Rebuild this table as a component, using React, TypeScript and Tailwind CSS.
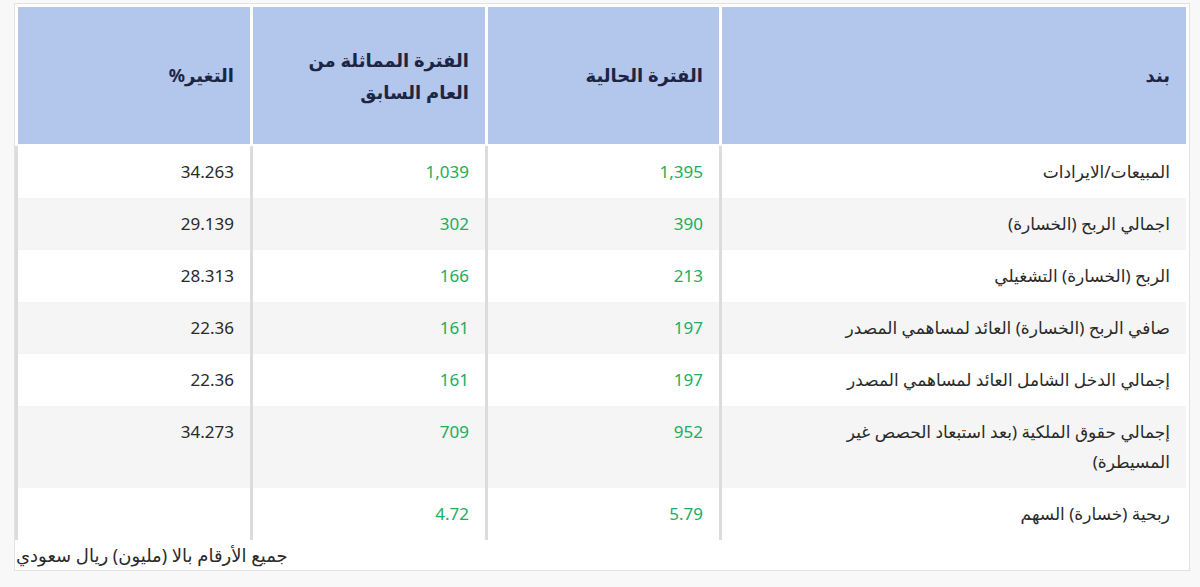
import React from "react";

type Row = {
  label: React.ReactNode;
  current: string;
  previous: string;
  change: string;
};

const rows: Row[] = [
  { label: "المبيعات/الايرادات", current: "1,395", previous: "1,039", change: "34.263" },
  { label: "اجمالي الربح (الخسارة)", current: "390", previous: "302", change: "29.139" },
  { label: "الربح (الخسارة) التشغيلي", current: "213", previous: "166", change: "28.313" },
  { label: "صافي الربح (الخسارة) العائد لمساهمي المصدر", current: "197", previous: "161", change: "22.36" },
  { label: "إجمالي الدخل الشامل العائد لمساهمي المصدر", current: "197", previous: "161", change: "22.36" },
  {
    label: (
      <>
        إجمالي حقوق الملكية (بعد استبعاد الحصص غير
        <br />
        المسيطرة)
      </>
    ),
    current: "952",
    previous: "709",
    change: "34.273",
  },
  { label: "ربحية (خسارة) السهم", current: "5.79", previous: "4.72", change: "" },
];

const font = { fontFamily: '"Noto Sans", "DejaVu Sans", sans-serif' };

export default function App() {
  return (
    <div className="min-h-[587px] bg-[#f8f8f8] pt-[3px]" style={font}>
      <div className="ml-[14px] w-[1176px] border border-[#e2e2e2] bg-white pt-[3px] pr-[3px]" dir="rtl">
        {/* header */}
        <div className="grid h-[137px] grid-cols-[467px_234px_235px_235px] text-[18px] font-bold text-[#1c2541]">
          <div className="flex items-center border-l-[3px] border-white bg-[#b3c6ec] pr-4">بند</div>
          <div className="flex items-center border-l-[3px] border-white bg-[#b3c6ec] pr-4">الفترة الحالية</div>
          <div className="flex items-center border-l-[3px] border-white bg-[#b3c6ec] pr-4 pl-6 leading-[32px]">
            الفترة المماثلة من العام السابق
          </div>
          <div className="flex items-center border-l-[3px] border-white bg-[#b3c6ec] pr-4">التغير%</div>
        </div>

        <div className="mt-[2px] text-[17px] leading-[30px] text-[#2a2a2a]">
          {rows.map((row, i) => (
            <div
              key={i}
              className={
                "grid grid-cols-[467px_234px_235px_235px] " + (i % 2 === 1 ? "bg-[#f5f5f5]" : "bg-white")
              }
            >
              <div className="border-l-[3px] border-[#dcdcdc] py-[11px] pr-4 pl-10">{row.label}</div>
              <div className="border-l-[3px] border-[#dcdcdc] py-[11px] pr-4 text-[#22ad5c]">{row.current}</div>
              <div className="border-l-[3px] border-[#dcdcdc] py-[11px] pr-4 text-[#22ad5c]">{row.previous}</div>
              <div className="border-l-[3px] border-[#dcdcdc] py-[11px] pr-4">{row.change}</div>
            </div>
          ))}
        </div>

        <div className="pl-[1px] text-left text-[18px] leading-[30px] text-[#2a2a2a]">
          جميع الأرقام بالا (مليون) ريال سعودي
        </div>
      </div>
    </div>
  );
}
